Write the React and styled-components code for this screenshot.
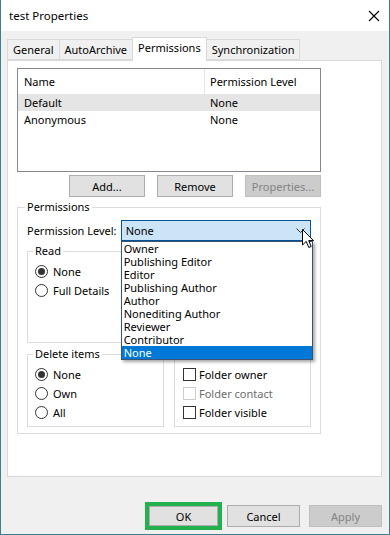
import React from 'react';
import styled, { createGlobalStyle } from 'styled-components';

const FONT = `"Noto Sans", "Open Sans", sans-serif`;

const GlobalStyle = createGlobalStyle`
    html, body {
        margin: 0;
        padding: 0;
        background: #fff;
    }

    * {
        box-sizing: border-box;
    }
`

const levels = [
    'Owner',
    'Publishing Editor',
    'Editor',
    'Publishing Author',
    'Author',
    'Nonediting Author',
    'Reviewer',
    'Contributor',
    'None'
];

const Radio = ({ label, checked }) => (
    <Option>
        <RadioMark $checked={ checked } />
        { label }
    </Option>
);

const Check = ({ label, disabled }) => (
    <Option $disabled={ disabled }>
        <CheckMark $disabled={ disabled } />
        { label }
    </Option>
);

const App = () => (
    <Window>
        <GlobalStyle />

        <TitleBar>
            <Title>test Properties</Title>

            <svg width="12" height="12" viewBox="0 0 12 12">
                <path d="M1 1 L11 11 M11 1 L1 11" stroke="#000" strokeWidth="1.1" fill="none" />
            </svg>
        </TitleBar>

        <Body>
            <Tabs>
                <Tab>General</Tab>
                <Tab>AutoArchive</Tab>
                <Tab $active>Permissions</Tab>
                <Tab>Synchronization</Tab>
            </Tabs>

            <Panel>
                <ListBox>
                    <ListHeader>
                        <Cell>Name</Cell>
                        <Cell $divider>Permission Level</Cell>
                    </ListHeader>

                    <ListRow $selected>
                        <Cell>Default</Cell>
                        <Cell>None</Cell>
                    </ListRow>

                    <ListRow>
                        <Cell>Anonymous</Cell>
                        <Cell>None</Cell>
                    </ListRow>
                </ListBox>

                <ButtonRow>
                    <Button>Add...</Button>
                    <Button>Remove</Button>
                    <Button disabled>Properties...</Button>
                </ButtonRow>

                <Group $width={ 304 } $outer>
                    <Legend>Permissions</Legend>

                    <LevelRow>
                        <LevelLabel>Permission Level:</LevelLabel>

                        <ComboWrap>
                            <Combo>
                                None
                                <svg width="9" height="5" viewBox="0 0 9 5">
                                    <path d="M0.5 0.5 L4.5 4.5 L8.5 0.5" stroke="#333" fill="none" />
                                </svg>
                            </Combo>

                            <DropList>
                                { levels.map((level) => (
                                    <DropItem key={ level } $selected={ level === 'None' }>
                                        { level }
                                    </DropItem>
                                )) }
                            </DropList>

                            <Cursor width="13" height="20" viewBox="0 0 13 20">
                                <path d="M0.5 0.5 L0.5 16 L4.2 12.4 L6.8 18.5 L9.2 17.5 L6.7 11.6 L11.5 11.6 Z"
                                    fill="#fff" stroke="#000" strokeWidth="1" strokeLinejoin="round" />
                            </Cursor>
                        </ComboWrap>
                    </LevelRow>

                    <GroupGrid>
                        <Group $height={ 100 }>
                            <Legend>Read</Legend>
                            <Radio label="None" checked />
                            <Radio label="Full Details" />
                        </Group>

                        {/* Write box: lies under the open drop-down list */}
                        <Group $height={ 100 }>
                            <Legend $blank />
                        </Group>

                        <Group $height={ 81 }>
                            <Legend>Delete items</Legend>
                            <Radio label="None" checked />
                            <Radio label="Own" />
                            <Radio label="All" />
                        </Group>

                        <Group $height={ 81 }>
                            <Legend $blank />
                            <Check label="Folder owner" />
                            <Check label="Folder contact" disabled />
                            <Check label="Folder visible" />
                        </Group>
                    </GroupGrid>
                </Group>
            </Panel>

            <DialogButtons>
                <Highlight>
                    <Button $fill>OK</Button>
                </Highlight>
                <Button $wide>Cancel</Button>
                <Button $wide disabled>Apply</Button>
            </DialogButtons>
        </Body>
    </Window>
);

export default App;

const Window = styled.div`
    width: 390px;
    height: 535px;
    display: flex;
    flex-direction: column;
    border: 1px solid #3d7f8e;
    border-top: none;
    font-family: ${ FONT };
    font-size: 11px;
    color: #000;
`

const TitleBar = styled.div`
    height: 31px;
    flex-shrink: 0;
    display: flex;
    align-items: center;
    justify-content: space-between;
    padding: 0 9px 0 8px;
    background: #fff;
`

const Title = styled.div`
    font-size: 11.5px;
`

const Body = styled.div`
    flex: 1;
    display: flex;
    flex-direction: column;
    background: #f0f0f0;
    padding: 6px 7px 0 6px;
`

const Tabs = styled.div`
    display: flex;
    align-items: flex-end;
    height: 23px;
    padding-left: 1px;
`

const Tab = styled.div`
    height: ${ (p) => (p.$active ? '24px' : '21px') };
    line-height: 20px;
    padding: 0 5px;
    margin-left: -1px;
    margin-bottom: ${ (p) => (p.$active ? '-1px' : '0') };
    border: 1px solid #d9d9d9;
    border-bottom: ${ (p) => (p.$active ? 'none' : '1px solid #d9d9d9') };
    background: ${ (p) => (p.$active ? '#fff' : '#f0f0f0') };
    position: relative;
    z-index: ${ (p) => (p.$active ? 1 : 0) };
`

const Panel = styled.div`
    height: 417px;
    background: #fff;
    border: 1px solid #d9d9d9;
    padding: 7px 0 0 9px;
`

const ListBox = styled.div`
    width: 304px;
    height: 104px;
    border: 1px solid #828790;
`

const ListHeader = styled.div`
    display: grid;
    grid-template-columns: 186px 1fr;
    height: 25px;
`

const ListRow = styled.div`
    display: grid;
    grid-template-columns: 186px 1fr;
    height: 17px;
    background: ${ (p) => (p.$selected ? '#e5e5e5' : 'transparent') };
`

const Cell = styled.div`
    display: flex;
    align-items: center;
    padding-left: ${ (p) => (p.$divider ? '5px' : '6px') };
    border-left: ${ (p) => (p.$divider ? '1px solid #e5e5e5' : 'none') };
`

const ButtonRow = styled.div`
    width: 304px;
    display: flex;
    justify-content: flex-end;
    gap: 12px;
    margin-top: 3px;
`

const Button = styled.button`
    width: ${ (p) => (p.$fill ? '100%' : p.$wide ? '73px' : '76px') };
    height: ${ (p) => (p.$fill ? '100%' : '22px') };
    padding: 0;
    font-family: ${ FONT };
    font-size: 11px;
    color: #000;
    background: #e1e1e1;
    border: 1px solid #adadad;

    &:disabled {
        color: #838383;
        background: #cccccc;
        border-color: #bfbfbf;
    }
`

const Group = styled.fieldset`
    width: ${ (p) => (p.$width ? `${ p.$width }px` : 'auto') };
    height: ${ (p) => (p.$height ? `${ p.$height }px` : 'auto') };
    margin: ${ (p) => (p.$outer ? '2px 0 0' : '0') };
    padding: ${ (p) => (p.$outer ? '0 9px 6px 9px' : '0 4px 4px 7px') };
    border: 1px solid #dcdcdc;
    min-width: 0;
`

const Legend = styled.legend`
    height: 16px;
    padding: ${ (p) => (p.$blank ? '0' : '0 2px') };
    margin-left: ${ (p) => (p.$blank ? '0' : '-2px') };
    line-height: 16px;
`

const LevelRow = styled.div`
    display: flex;
    align-items: center;
    margin-top: 5px;
`

const LevelLabel = styled.div`
    width: 94px;
`

const ComboWrap = styled.div`
    position: relative;
    width: 191px;
    height: 21px;
`

const Combo = styled.div`
    height: 100%;
    display: flex;
    align-items: center;
    justify-content: space-between;
    padding: 0 5px 0 4px;
    background: #cce4f7;
    border: 1px solid #005499;
`

const DropList = styled.div`
    position: absolute;
    top: 21px;
    left: 0;
    width: 192px;
    z-index: 5;
    background: #fff;
    border: 1px solid #3b5570;
    box-shadow: 2px 2px 3px rgba(0, 0, 0, 0.35);
`

const DropItem = styled.div`
    height: 13px;
    line-height: 13px;
    padding-left: 2px;
    color: ${ (p) => (p.$selected ? '#fff' : '#000') };
    background: ${ (p) => (p.$selected ? '#0078d7' : 'transparent') };
`

const Cursor = styled.svg`
    position: absolute;
    left: 181px;
    top: 9px;
    z-index: 6;
`

const GroupGrid = styled.div`
    display: grid;
    grid-template-columns: 137px 137px;
    column-gap: 10px;
    row-gap: 3px;
    margin-top: 2px;
`

const Option = styled.div`
    display: flex;
    width: fit-content;
    align-items: center;
    gap: 3px;
    height: 19px;
    color: ${ (p) => (p.$disabled ? '#6d6d6d' : '#000') };

    legend + & {
        margin-top: 3px;
    }
`

const RadioMark = styled.span`
    width: 13px;
    height: 13px;
    margin-right: 2px;
    border-radius: 50%;
    border: 1px solid #333;
    display: flex;
    align-items: center;
    justify-content: center;

    &::after {
        content: '';
        width: 7px;
        height: 7px;
        border-radius: 50%;
        background: ${ (p) => (p.$checked ? '#333' : 'transparent') };
    }
`

const CheckMark = styled.span`
    width: 13px;
    height: 13px;
    margin-left: 1px;
    border: 1px solid ${ (p) => (p.$disabled ? '#cccccc' : '#333') };
    background: #fff;
`

const DialogButtons = styled.div`
    display: flex;
    justify-content: flex-end;
    align-items: center;
    gap: 9px;
    margin-top: 25px;
`

const Highlight = styled.div`
    width: 77px;
    height: 28px;
    margin-right: -4px;
    border: 4px solid #22b14c;
`
